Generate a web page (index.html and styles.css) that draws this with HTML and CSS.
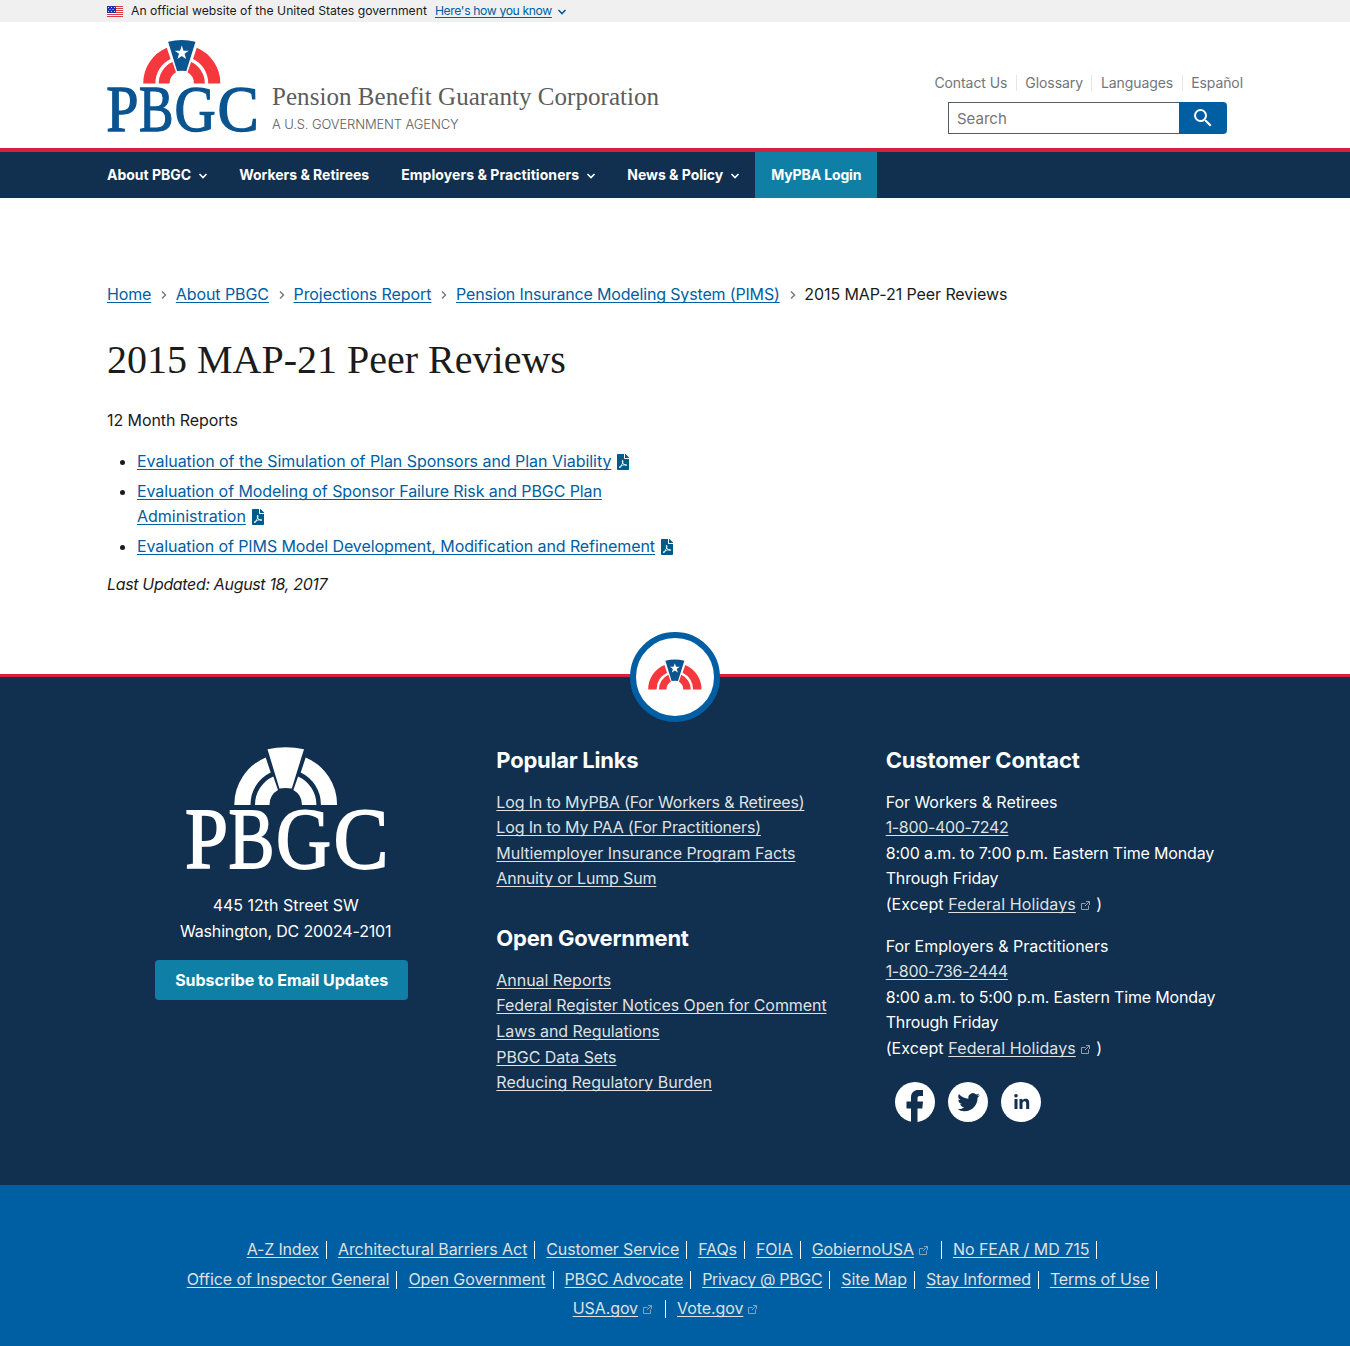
FILE: index.html
```html
<!DOCTYPE html>
<html lang="en">
<head>
<meta charset="utf-8">
<title>2015 MAP-21 Peer Reviews | Pension Benefit Guaranty Corporation</title>
<link rel="stylesheet" href="styles.css">
</head>
<body>
<svg class="sprite" aria-hidden="true">
  <symbol id="bands" viewBox="0 0 200 58" overflow="visible">
    <path d="M48.3 58A51.3 51.3 0 0 1 79.7 10.5L84.7 25.5A35.5 35.5 0 0 0 64.5 58ZM69 58A31 31 0 0 1 87.3 29.5L92 43A17 17 0 0 0 83.5 58Z"/>
    <path d="M151.1 58A51.3 51.3 0 0 0 119.7 10.5L114.7 25.5A35.5 35.5 0 0 1 134.9 58ZM130.4 58A31 31 0 0 0 112.1 29.5L107.4 43A17 17 0 0 1 115.9 58Z"/>
  </symbol>
  <symbol id="keystone" viewBox="0 0 200 58" overflow="visible">
    <path d="M81.5 2.3Q99.7-2 118 2.3L105.8 41.5Q99.7 40.5 93.4 41.5Z"/>
  </symbol>
  <symbol id="star" viewBox="0 0 200 58" overflow="visible">
    <path d="M99.7 7.5L102 14.2L109 14.3L103.4 18.5L105.5 25.2L99.7 21.2L93.9 25.2L96 18.5L90.4 14.3L97.4 14.2Z"/>
  </symbol>
  <symbol id="chevron" viewBox="0 0 8 6" overflow="visible"><path d="M.5 1L4 4.5L7.5 1" fill="none" stroke="currentColor" stroke-width="1.6"/></symbol>
  <symbol id="next" viewBox="0 0 6 10"><path d="M1 1.5L4.5 5L1 8.5" fill="none" stroke="#71767a" stroke-width="1.4"/></symbol>
  <symbol id="external" viewBox="0 0 11 11"><path d="M5.5 3.5H1.5V9.5H8.5V5.5M6 1.5H9.5V5M9.5 1.5L5 6" fill="none" stroke="currentColor"/></symbol>
  <symbol id="pdf" viewBox="0 0 384 512"><path d="M181.9 256.1c-5-16-4.9-46.9-2-46.9 8.4 0 7.6 36.9 2 46.9zm-1.7 47.2c-7.7 20.2-17.3 43.3-28.4 62.7 18.3-7 39-17.2 62.9-21.9-12.7-9.6-24.9-23.4-34.5-40.8zM86.1 428.1c0 .8 13.2-5.4 34.9-40.2-6.7 6.3-29.1 24.5-34.9 40.2zM248 160h136v328c0 13.3-10.7 24-24 24H24c-13.3 0-24-10.7-24-24V24C0 10.7 10.7 0 24 0h200v136c0 13.2 10.8 24 24 24zm-8 171.8c-20-12.2-33.3-29-42.7-53.8 4.5-18.5 11.6-46.6 6.2-64.2-4.7-29.4-42.4-26.5-47.8-6.8-5 18.3-.4 44.1 8.1 77-11.6 27.6-28.7 64.6-40.8 85.8-.1 0-.1.1-.2.1-27.1 13.9-73.6 44.5-54.5 68 5.6 6.9 16 10 21.5 10 17.9 0 35.7-18 61.1-61.8 25.8-8.5 54.1-19.1 79-23.2 21.7 11.8 47.1 19.5 64 19.5 29.2 0 31.2-32 19.7-43.4-13.9-13.6-54.3-9.7-73.6-7.2zM377 105L279 7c-4.5-4.5-10.6-7-17-7h-6v128h128v-6.1c0-6.3-2.5-12.4-7-16.9zm-74.1 255.3c4.1-2.7-2.5-11.9-42.8-9 37.1 15.8 42.8 9 42.8 9z"/></symbol>
</svg>

<div class="banner">
  <div class="wrap banner-row">
    <svg class="flag" viewBox="0 0 16 11"><path fill="#fff" d="M0 0h16v11H0z"/><path fill="#db3e3e" d="M0 0h16v1H0zM0 2h16v1H0zM0 4h16v1H0zM0 6h16v1H0zM0 8h16v1H0zM0 10h16v1H0z"/><path fill="#1e33b1" d="M0 0h9v7H0z"/><path fill="#fff" opacity=".8" d="M1 1h1v1H1zM4 1h1v1H4zM7 1h1v1H7zM2.5 3h1v1h-1zM5.5 3h1v1h-1zM1 5h1v1H1zM4 5h1v1H4zM7 5h1v1H7z"/></svg>
    <span>An official website of the United States government</span>
    <a class="banner-link" href="#">Here's how you know</a>
    <svg class="chev"><use href="#chevron"/></svg>
  </div>
</div>

<header class="header">
  <div class="wrap header-row">
    <svg class="logo" viewBox="0 0 200 122.7" role="img" aria-label="PBGC">
      <use href="#bands" class="red" width="200" height="58"/>
      <use href="#keystone" class="blue" width="200" height="58"/>
      <use href="#star" class="white" width="200" height="58"/>
      <g class="letters letters-blue"><text x="-1" y="121" textLength="43" lengthAdjust="spacingAndGlyphs">P</text><text x="42.5" y="121" textLength="46" lengthAdjust="spacingAndGlyphs">B</text><text x="90" y="121" textLength="55" lengthAdjust="spacingAndGlyphs">G</text><text x="147.5" y="121" textLength="55" lengthAdjust="spacingAndGlyphs">C</text></g>
    </svg>
    <div class="title">
      <div class="name">Pension Benefit Guaranty Corporation</div>
      <div class="agency">A U.S. GOVERNMENT AGENCY</div>
    </div>
    <div class="tools">
      <ul class="quick"><li>Contact Us</li><li>Glossary</li><li>Languages</li><li>Español</li></ul>
      <form class="search">
        <input type="text" placeholder="Search" aria-label="Search">
        <button type="button" aria-label="Search"><svg width="24" height="24" viewBox="0 0 24 24" fill="#fff"><path d="M15.5 14h-.79l-.28-.27A6.471 6.471 0 0 0 16 9.5 6.5 6.5 0 1 0 9.5 16c1.61 0 3.09-.59 4.23-1.57l.27.28v.79l5 4.99L20.49 19l-4.99-5zm-6 0C7.01 14 5 11.99 5 9.5S7.01 5 9.5 5 14 7.01 14 9.5 11.99 14 9.5 14z"/></svg></button>
      </form>
    </div>
  </div>
</header>

<nav class="nav">
  <ul class="wrap nav-row">
    <li>About PBGC<svg class="chev"><use href="#chevron"/></svg></li>
    <li>Workers &amp; Retirees</li>
    <li class="wider">Employers &amp; Practitioners<svg class="chev"><use href="#chevron"/></svg></li>
    <li>News &amp; Policy<svg class="chev"><use href="#chevron"/></svg></li>
    <li class="login">MyPBA Login</li>
  </ul>
</nav>

<main class="wrap main">
  <ol class="crumbs">
    <li class="tight"><a href="#">Home</a></li>
    <li><svg class="next"><use href="#next"/></svg><a href="#">About PBGC</a></li>
    <li><svg class="next"><use href="#next"/></svg><a href="#">Projections Report</a></li>
    <li><svg class="next"><use href="#next"/></svg><a class="tight" href="#">Pension Insurance Modeling System (PIMS)</a></li>
    <li><svg class="next"><use href="#next"/></svg><span>2015 MAP-21 Peer Reviews</span></li>
  </ol>
  <h1>2015 MAP-21 Peer Reviews</h1>
  <p>12 Month Reports</p>
  <ul class="reports">
    <li><a class="wide" href="#">Evaluation of the Simulation of Plan Sponsors and Plan Viability</a><svg class="pdf"><use href="#pdf"/></svg></li>
    <li><a href="#">Evaluation of Modeling of Sponsor Failure Risk and PBGC Plan<br><span class="loose">Administration</span></a><svg class="pdf"><use href="#pdf"/></svg></li>
    <li><a class="pims" href="#">Evaluation of PIMS Model Development, Modification and Refinement</a><svg class="pdf"><use href="#pdf"/></svg></li>
  </ul>
  <p class="updated">Last Updated: August 18, 2017</p>
</main>

<footer class="footer">
  <div class="badge"><svg viewBox="48 0 104 58"><use href="#bands" class="red" width="200" height="58"/><use href="#keystone" class="blue" width="200" height="58"/><use href="#star" class="white" width="200" height="58"/></svg></div>
  <div class="wrap columns">
    <section class="contact">
      <svg class="footer-logo" viewBox="0 0 200 122.7" role="img" aria-label="PBGC">
        <use href="#bands" class="white" width="200" height="58"/>
        <use href="#keystone" class="white" width="200" height="58"/>
        <g class="letters letters-white"><text x="-1" y="121" textLength="43" lengthAdjust="spacingAndGlyphs">P</text><text x="42.5" y="121" textLength="46" lengthAdjust="spacingAndGlyphs">B</text><text x="90" y="121" textLength="55" lengthAdjust="spacingAndGlyphs">G</text><text x="147.5" y="121" textLength="55" lengthAdjust="spacingAndGlyphs">C</text></g>
      </svg>
      <p class="tight"><span class="loose">445 12th Street SW</span><br>Washington, DC 20024-2101</p>
      <a class="subscribe" href="#">Subscribe to Email Updates</a>
    </section>
    <section>
      <h2>Popular Links</h2>
      <ul class="links">
        <li class="tight"><a href="#">Log In to MyPBA (For Workers &amp; Retirees)</a></li>
        <li class="tight"><a href="#">Log In to My PAA (For Practitioners)</a></li>
        <li class="wide"><a href="#">Multiemployer Insurance Program Facts</a></li>
        <li class="tight"><a href="#">Annuity or Lump Sum</a></li>
      </ul>
      <h2>Open Government</h2>
      <ul class="links">
        <li class="wide"><a href="#">Annual Reports</a></li>
        <li><a href="#">Federal Register Notices Open for Comment</a></li>
        <li><a href="#">Laws and Regulations</a></li>
        <li><a href="#">PBGC Data Sets</a></li>
        <li class="loose"><a href="#">Reducing Regulatory Burden</a></li>
      </ul>
    </section>
    <section>
      <h2 class="customer">Customer Contact</h2>
      <p class="tight"><span class="wide">For Workers &amp; Retirees</span><br><a class="tighter" href="#">1-800-400-7242</a><br>8:00 a.m. to 7:00 p.m. Eastern Time Monday Through Friday<br><span class="holidays">(Except <a href="#">Federal Holidays</a><svg class="ext"><use href="#external"/></svg> )</span></p>
      <p class="tight"><span class="loose">For Employers &amp; Practitioners</span><br><a class="tighter" href="#">1-800-736-2444</a><br>8:00 a.m. to 5:00 p.m. Eastern Time Monday Through Friday<br><span class="holidays">(Except <a href="#">Federal Holidays</a><svg class="ext"><use href="#external"/></svg> )</span></p>
      <div class="social">
        <svg viewBox="0 0 40 40"><circle cx="20" cy="20" r="20" fill="#fff"/><path fill="#112f4e" d="M16 40V26.5H11.5V19.5H16V15.5C16 10.5 19 8 23.5 8H28V14H25C23 14 22.5 14.8 22.5 16.5V19.5H28L27.3 26.5H22.5V40Z"/></svg>
        <svg viewBox="0 0 40 40"><circle cx="20" cy="20" r="20" fill="#fff"/><path fill="#112f4e" transform="translate(9.5 9) scale(.93)" d="M23.954 4.569a10 10 0 0 1-2.825.775 4.958 4.958 0 0 0 2.163-2.723 9.9 9.9 0 0 1-3.127 1.184 4.92 4.92 0 0 0-8.384 4.482C7.691 8.094 4.066 6.13 1.64 3.161a4.92 4.92 0 0 0 1.523 6.574 4.9 4.9 0 0 1-2.229-.616v.061a4.923 4.923 0 0 0 3.946 4.827 5 5 0 0 1-2.212.085 4.937 4.937 0 0 0 4.604 3.417A9.868 9.868 0 0 1 0 19.54a13.94 13.94 0 0 0 7.548 2.212c9.054 0 13.999-7.496 13.999-13.986 0-.209 0-.42-.015-.63a9.936 9.936 0 0 0 2.46-2.548z"/></svg>
        <svg viewBox="0 0 40 40"><circle cx="20" cy="20" r="20" fill="#fff"/><path fill="#112f4e" d="M13.5 17H16.5V27H13.5ZM18.5 17H21.4V18.4C22 17.4 23.1 16.7 24.6 16.7C27.6 16.7 28.2 18.7 28.2 21.4V27H25.2V22C25.2 20.7 25.1 19.3 23.4 19.3C21.8 19.3 21.5 20.6 21.5 22V27H18.5Z"/><circle cx="15" cy="13.8" r="1.8" fill="#112f4e"/></svg>
      </div>
    </section>
  </div>
</footer>

<div class="bottom">
  <ul class="legal">
    <li class="tight"><a href="#">A-Z Index</a></li><li class="wide"><a href="#">Architectural Barriers Act</a></li><li class="tight"><a href="#">Customer Service</a></li><li><a href="#">FAQs</a></li><li><a href="#">FOIA</a></li><li class="has-ext"><a href="#">GobiernoUSA</a><svg class="ext"><use href="#external"/></svg></li><li class="wide"><a href="#">No FEAR / MD 715</a></li>
    <li><a href="#">Office of Inspector General</a></li><li><a href="#">Open Government</a></li><li class="tight"><a href="#">PBGC Advocate</a></li><li class="tighter"><a href="#">Privacy @ PBGC</a></li><li><a href="#">Site Map</a></li><li><a href="#">Stay Informed</a></li><li class="tight"><a href="#">Terms of Use</a></li>
    <li class="has-ext"><a href="#">USA.gov</a><svg class="ext"><use href="#external"/></svg></li><li class="has-ext"><a href="#">Vote.gov</a><svg class="ext"><use href="#external"/></svg></li>
  </ul>
</div>
</body>
</html>
```
FILE: styles.css
```css
* { box-sizing: border-box; }
body { margin: 0; background: #fff; color: #1b1b1b; font: 16px/25.6px "Inter", "Liberation Sans", sans-serif; letter-spacing: -.08px; }
ul, ol { list-style: none; margin: 0; padding: 0; }
p { margin: 0; }
svg { display: block; flex: none; }
a { color: #005ea2; text-underline-offset: 2px; text-decoration-thickness: 1px; text-decoration-skip-ink: none; }
.sprite { position: absolute; width: 0; height: 0; }
.wrap { width: 1136px; margin: 0 auto; }
.tight { letter-spacing: -.16px; }
.tighter { letter-spacing: -.34px; }
.wide { letter-spacing: -.04px; }
.loose { letter-spacing: 0; }
.red { fill: #f4383e; }
.blue { fill: #0a5490; }
.white { fill: #fff; }
.chev { width: 8px; height: 6px; margin-left: 8px; overflow: visible; }

.banner { height: 22px; background: #f0f0f0; font-size: 12.2px; letter-spacing: 0; }
.banner-row { display: flex; align-items: center; height: 22px; }
.flag { align-self: flex-start; width: 16px; height: 11px; margin: 6px 8px 0 0; }
.banner-link { margin-left: 8px; letter-spacing: -.38px; }
.banner .chev { color: #005ea2; margin: 2px 0 0 6px; }

.header { height: 130px; border-bottom: 4px solid #d6203f; }
.header-row { display: flex; padding-top: 18px; }
.logo { width: 150px; height: 92px; overflow: visible; }
.letters { font: 86px "Liberation Serif", serif; letter-spacing: 0; }
.letters-blue { fill: #0a5490; stroke: #0a5490; stroke-width: 1.8px; }
.letters-white { fill: #fff; stroke: #fff; stroke-width: 1.8px; }
.title { margin: 42px 0 0 15px; color: #5c5c5c; }
.name { font: 25px/30px "Liberation Serif", serif; letter-spacing: .05px; white-space: nowrap; }
.agency { margin-top: 1px; font-size: 13px; font-weight: 300; line-height: 22px; letter-spacing: -.12px; }
.tools { display: flex; flex-direction: column; margin-left: auto; padding-top: 33px; }
.quick { display: flex; align-items: center; font-size: 14px; line-height: 20px; color: #71767a; }
.quick li + li { display: flex; align-items: center; }
.quick li + li::before { content: ""; width: 1px; height: 16px; margin: 0 8.5px; background: #e6e6e6; }
.search { display: flex; align-self: flex-end; width: 279px; height: 32px; margin: 9px 16px 0 0; }
.search input { flex: 1; min-width: 0; border: 1px solid #565c65; border-right: 0; border-radius: 0; padding: 1px 8px 0; font: 15px "Inter", sans-serif; }
.search input::placeholder { color: #757575; opacity: 1; }
.search button { display: grid; place-items: center; width: 48px; padding: 0; border: 0; border-radius: 0 4px 4px 0; background: #005ea2; }

.nav { height: 46px; background: #112f4e; color: #fff; font-size: 14px; font-weight: 700; letter-spacing: -.01px; }
.nav-row { display: flex; height: 46px; }
.nav li { display: flex; align-items: center; padding: 0 16px; white-space: nowrap; }
.nav li:first-child { padding-left: 0; }
.nav .wider { letter-spacing: .07px; }
.nav .chev { margin-top: 2px; }
.nav .login { background: #0f7fa5; letter-spacing: -.14px; }

.main { height: 476px; padding-top: 84px; }
.crumbs { display: flex; }
.crumbs li { display: flex; align-items: center; }
.next { width: 6px; height: 10px; margin: 0 8.6px 0 10px; }
h1 { margin: 28px 0 24.4px; font: 40px/48px "Liberation Serif", serif; letter-spacing: 0; }
.reports { margin: 15.4px 0 12px; padding-left: 30px; list-style: disc; }
.reports li + li { margin-top: 4.1px; }
.pims { letter-spacing: -.092px; }
.pdf { display: inline-block; width: 12px; height: 16px; margin-left: 6px; vertical-align: -3px; fill: #005b88; }
.updated { font-style: italic; letter-spacing: -.34px; }

.footer { position: relative; height: 511px; border-top: 3px solid #d6203f; background: #112f4e; color: #fff; }
.footer a { color: #dfe1e2; }
.badge { position: absolute; left: 50%; top: -45px; display: grid; place-items: center; width: 90px; height: 90px; margin-left: -45px; border: 6px solid #005ea2; border-radius: 50%; background: #fff; }
.badge svg { width: 54px; height: 31px; margin-top: -5px; }
.columns { display: grid; grid-template-columns: repeat(3, 1fr); gap: 32px; padding-top: 68.7px; }
.contact { text-align: center; }
.footer-logo { width: 200px; height: 122.7px; margin: 1px auto 23.6px; overflow: visible; }
.footer .subscribe { display: inline-block; width: 253px; margin: 16px 8px 0 0; border-radius: 4px; background: #0f7fa5; color: #fff; font-weight: 700; line-height: 40px; text-decoration: none; letter-spacing: -.04px; }
h2 { margin: 0 0 16px; font-size: 22px; line-height: 28px; letter-spacing: -.25px; }
.customer { letter-spacing: -.15px; }
.links + h2 { margin-top: 31.8px; }
.columns p + p { margin-top: 16px; }
.ext { display: inline-block; width: 11px; height: 11px; margin-left: 4px; vertical-align: -1px; color: #8fa0b0; }
.holidays { letter-spacing: .1px; }
.holidays .ext { margin-right: 1px; }
.social { display: flex; gap: 13px; margin: 20.3px 0 0 9px; }
.social svg { width: 40px; height: 40px; }

.bottom { height: 161px; padding-top: 50px; background: #005ea2; }
.bottom a { color: #dfe1e2; }
.legal { display: flex; flex-wrap: wrap; justify-content: center; width: 1010px; margin: 0 auto; row-gap: 11.5px; }
.legal li { display: flex; align-items: center; height: 18px; margin: 6px 8.5px -6px 2.5px; padding-right: 7px; border-right: 1px solid #fff; }
.legal .has-ext { padding-right: 12px; }
.legal li:last-child { border-color: transparent; }
```
